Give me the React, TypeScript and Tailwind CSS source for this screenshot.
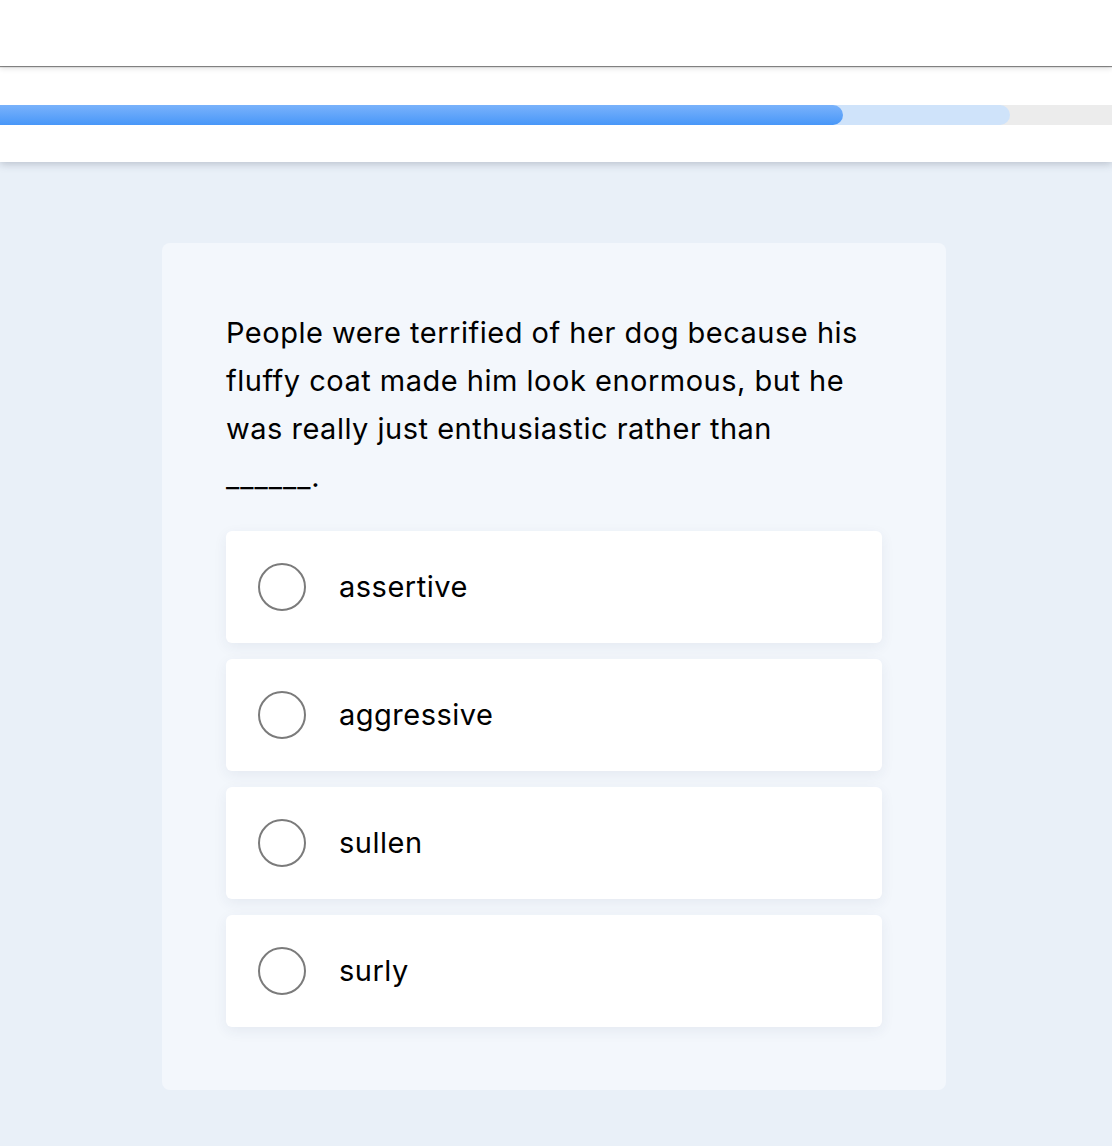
import React from "react";

const options = ["assertive", "aggressive", "sullen", "surly"];

export default function App() {
  return (
    <div
      className="min-h-[1146px] w-full bg-[#e9f0f8]"
      style={{ fontFamily: "Inter, 'Noto Sans', sans-serif" }}
    >
      <div className="relative z-20 h-[66px] w-full bg-white shadow-[0_1px_1px_rgba(0,0,0,0.45),0_3px_5px_rgba(0,0,0,0.1)]" />
      <div className="relative z-10 flex h-[96px] w-full items-start bg-white pt-[39px] shadow-[0_2px_8px_rgba(60,70,90,0.28)]">
        <div className="relative h-[20px] w-full bg-[#ececec]">
          <div className="absolute left-0 top-0 h-[20px] w-[1010px] rounded-r-[10px] bg-[#cfe3fa]" />
          <div className="absolute left-0 top-0 h-[20px] w-[843px] rounded-r-[10px] bg-gradient-to-b from-[#79b2fb] to-[#4897f8]" />
        </div>
      </div>
      <div className="flex justify-start pl-[162px] pt-[81px] pb-[56px]">
        <div className="w-[784px] rounded-[8px] bg-[#f3f7fc] px-[64px] pt-[66px] pb-[63px]">
          <p className="text-[29px] leading-[48px] text-black whitespace-nowrap tracking-[0.5px]">
            People were terrified of her dog because his
            <br />
            fluffy coat made him look enormous, but he
            <br />
            was really just enthusiastic rather than
            <br />
            <span className="tracking-[1px]">______</span>.
          </p>
          <div className="mt-[30px] flex flex-col gap-[16px]">
            {options.map((o) => (
              <div
                key={o}
                className="flex h-[112px] items-center rounded-[6px] bg-white pl-[32px] shadow-[0_4px_14px_rgba(40,60,100,0.07)]"
              >
                <div className="h-[48px] w-[48px] rounded-full border-2 border-[#7b7b7b] bg-white" />
                <span className="ml-[33px] text-[29px] tracking-[0.5px] text-black">{o}</span>
              </div>
            ))}
          </div>
        </div>
      </div>
    </div>
  );
}
